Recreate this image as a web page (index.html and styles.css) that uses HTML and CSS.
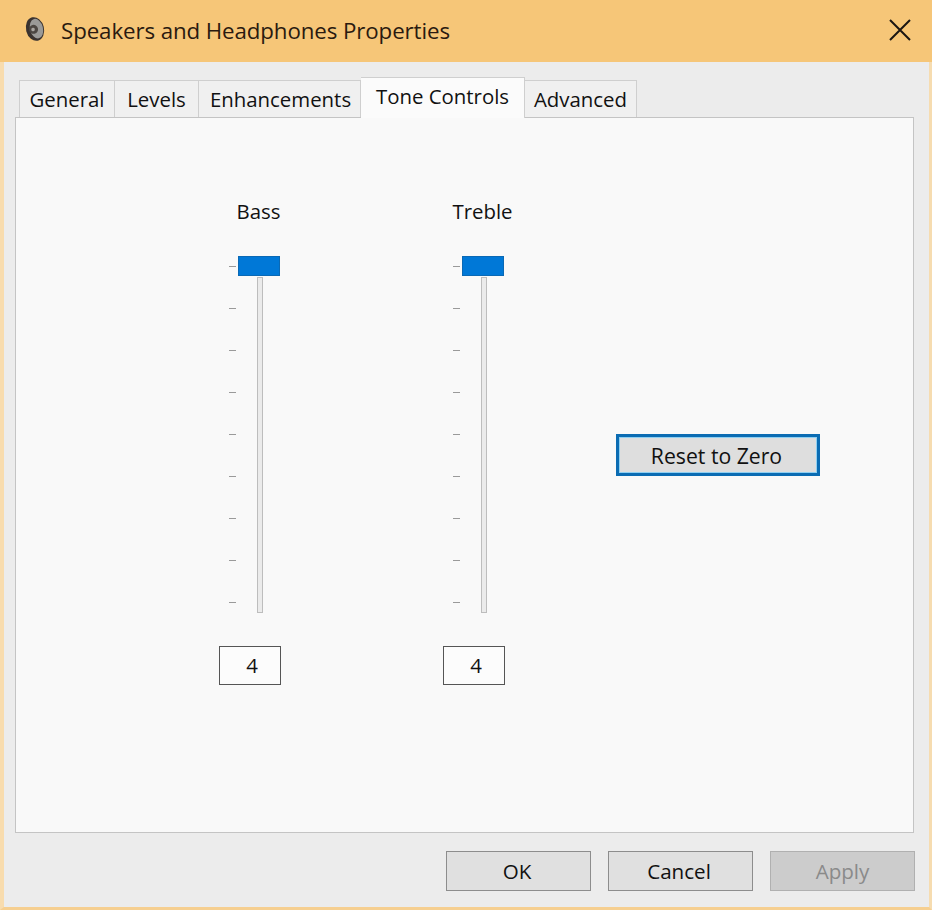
FILE: index.html
```html
<!DOCTYPE html>
<html lang="en">
<head>
  <meta charset="UTF-8">
  <title>Speakers and Headphones Properties</title>
  <link rel="stylesheet" href="styles.css">
</head>
<body>

<div class="window">
  <div class="titlebar">
    <svg class="app-icon" width="24" height="28" viewBox="0 0 24 28">
      <g transform="rotate(-14 12 14)">
        <ellipse cx="12" cy="14" rx="9" ry="12" fill="#3a3330"/>
        <ellipse cx="13.5" cy="14" rx="6.5" ry="10" fill="#9a9a98"/>
        <ellipse cx="10.5" cy="14" rx="4.5" ry="4.5" fill="#4c4743"/>
        <circle cx="10" cy="14" r="1.8" fill="#a8a5a0"/>
      </g>
    </svg>
    <span class="title">Speakers and Headphones Properties</span>
    <svg class="close" width="22" height="22" viewBox="0 0 22 22">
      <path d="M1 1 L21 21 M21 1 L1 21" stroke="#1a1512" stroke-width="2" fill="none"/>
    </svg>
  </div>

  <div class="content">
    <ul class="tabs">
      <li class="tab tab-general">General</li>
      <li class="tab tab-levels">Levels</li>
      <li class="tab tab-enh">Enhancements</li>
      <li class="tab tab-tone now">Tone Controls</li>
      <li class="tab tab-adv">Advanced</li>
    </ul>

    <div class="panel">
      <div class="slider">
        <div class="slider-label">Bass</div>
        <div class="scale">
          <div class="ticks">
            <i></i><i></i><i></i><i></i><i></i><i></i><i></i><i></i><i></i>
          </div>
          <div class="track"></div>
          <div class="thumb"></div>
        </div>
        <div class="value">4</div>
      </div>

      <div class="slider">
        <div class="slider-label">Treble</div>
        <div class="scale">
          <div class="ticks">
            <i></i><i></i><i></i><i></i><i></i><i></i><i></i><i></i><i></i>
          </div>
          <div class="track"></div>
          <div class="thumb"></div>
        </div>
        <div class="value">4</div>
      </div>

      <button class="btn reset">Reset to Zero</button>
    </div>

    <div class="footer">
      <button class="btn">OK</button>
      <button class="btn">Cancel</button>
      <button class="btn disabled">Apply</button>
    </div>
  </div>
</div>

</body>
</html>
```

FILE: styles.css
```css
* {
  margin: 0;
  padding: 0;
  list-style: none;
  box-sizing: border-box;
}

body {
  font-family: "Open Sans", "Noto Sans", sans-serif;
  font-size: 20.4px;
  color: #111;
  background-color: #f6c678;
}

.window {
  width: 932px;
  height: 910px;
  display: flex;
  flex-direction: column;
  overflow: hidden;
}

.titlebar {
  height: 62px;
  flex: none;
  display: flex;
  align-items: center;
  background-color: #f6c678;
  padding: 0 21px 0 23px;
}

.app-icon {
  margin-right: 14px;
  margin-top: -4px;
}

.title {
  font-size: 22.3px;
  color: #2a1a10;
  flex: 1;
  letter-spacing: -0.1px;
  padding-bottom: 2px;
}

.close {
  margin-top: -2px;
}

.content {
  flex: 1;
  background-color: #ececec;
  border-left: 4px solid #f8dcae;
  border-right: 3px solid #f6dcb0;
  border-bottom: 3px solid #f6cf90;
  padding: 15px 0 0 11px;
  display: flex;
  flex-direction: column;
}

.tabs {
  display: flex;
  align-items: flex-end;
  padding-left: 4px;
  height: 41px;
  position: relative;
  z-index: 1;
  margin-bottom: -1px;
}

.tab {
  height: 37px;
  margin-bottom: 1px;
  background-color: #f0f0f0;
  border: 1px solid #cfcfcf;
  border-bottom: none;
  border-left-width: 0;
  display: flex;
  align-items: center;
  justify-content: center;
  white-space: nowrap;
}

.tab-general {
  width: 96px;
  border-left-width: 1px;
}

.tab-levels {
  width: 84px;
}

.tab-enh {
  width: 162px;
  padding-left: 2px;
}

.tab-tone {
  width: 164px;
}

.tab-adv {
  width: 112px;
}

.tab.now {
  height: 41px;
  margin-bottom: 0;
  background-color: #fbfbfb;
  padding-bottom: 5px;
}

.panel {
  width: 899px;
  height: 716px;
  flex: none;
  background-color: #f9f9f9;
  border: 1px solid #c4c4c4;
  display: flex;
  align-items: flex-start;
  padding: 79px 0 0 203px;
}

.slider {
  width: 62px;
  margin-right: 162px;
  display: flex;
  flex-direction: column;
}

.slider-label {
  height: 32px;
  line-height: 28px;
  margin-left: -20px;
  margin-right: -20px;
  padding-left: 17px;
  text-align: center;
  white-space: nowrap;
}

.scale {
  position: relative;
  display: flex;
  margin-top: 27px;
  height: 357px;
}

.ticks {
  margin: 10px 0 0 10px;
  width: 7px;
  display: flex;
  flex-direction: column;
  gap: 41px;
}

.ticks i {
  display: block;
  height: 1px;
  background-color: #9a9a9a;
}

.track {
  width: 6px;
  height: 336px;
  margin: 21px 0 0 21px;
  background-color: #ebebeb;
  border: 1px solid #bdbdbd;
}

.thumb {
  position: absolute;
  left: 19px;
  top: 0;
  width: 42px;
  height: 20px;
  background-color: #0078d7;
  border: 1px solid #0a69b5;
}

.value {
  width: 62px;
  height: 39px;
  margin-top: 33px;
  border: 1px solid #555;
  background-color: #fcfcfc;
  text-align: center;
  line-height: 36px;
  padding-left: 4px;
}

.btn {
  width: 145px;
  height: 40px;
  padding: 0 3px 0 0;
  font-family: inherit;
  font-size: 20.6px;
  color: #111;
  background-color: #e0e0e0;
  border: 1px solid #8d8d8d;
}

.btn.reset {
  width: 204px;
  height: 42px;
  margin: 237px 0 0 -51px;
  font-size: 21.2px;
  border: 3px solid #0b6cb3;
  box-shadow: inset 0 0 0 1px #8fd0f2;
  background-color: #dedede;
}

.btn.disabled {
  color: #8a8a8a;
  background-color: #cccccc;
  border-color: #b0b0b0;
  padding-right: 0;
}

.footer {
  display: flex;
  justify-content: flex-end;
  gap: 17px;
  padding: 18px 14px 0 0;
}
```
